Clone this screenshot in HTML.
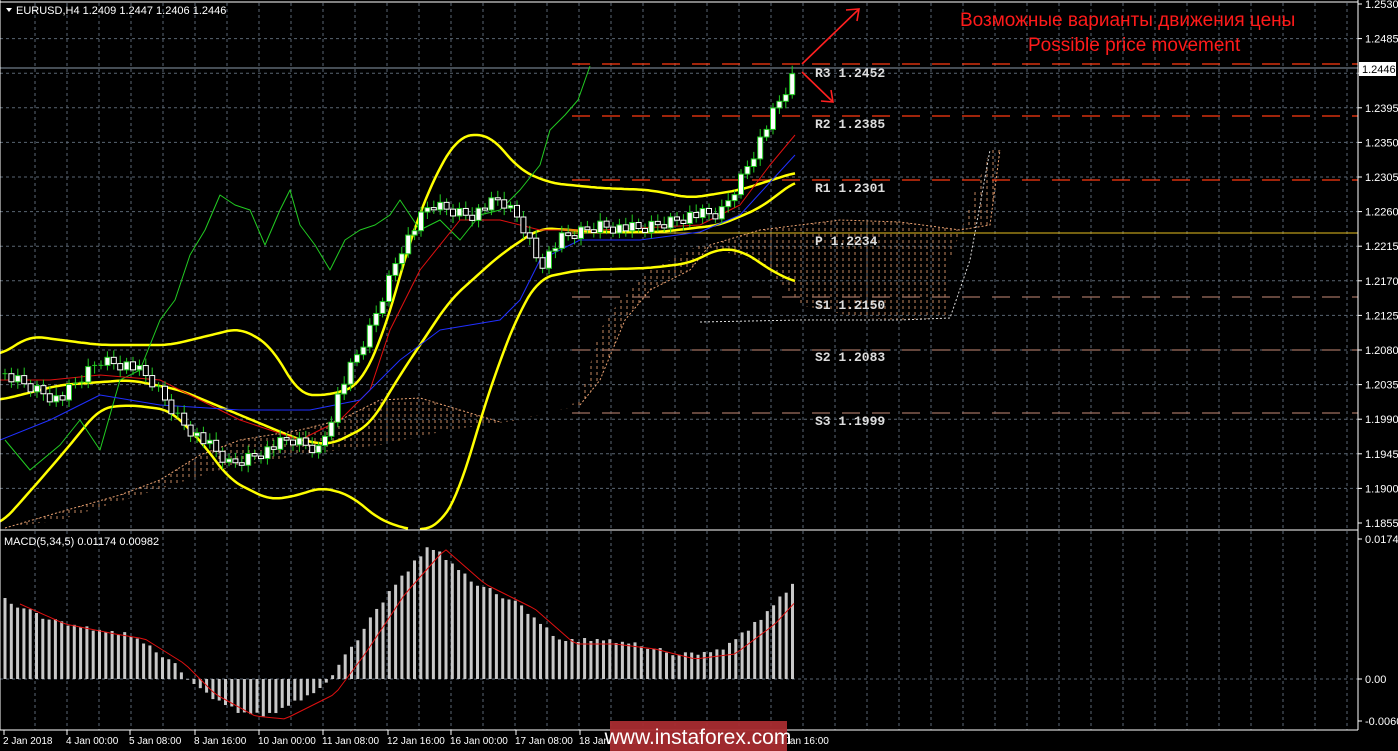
<!DOCTYPE html><html><head><meta charset="utf-8"><style>
html,body{margin:0;padding:0;background:#000;width:1398px;height:751px;overflow:hidden}
svg{display:block}
text{font-family:"Liberation Sans",sans-serif}
.mono text{font-family:"Liberation Mono",monospace}
</style></head><body>
<svg id="s" width="1398" height="751" xmlns="http://www.w3.org/2000/svg">
<defs>
<pattern id="cl" width="6" height="6" patternUnits="userSpaceOnUse"><line x1="3" y1="0" x2="3" y2="3" stroke="#e8a070" stroke-width="1"/></pattern>
</defs>
<rect width="1398" height="751" fill="#000"/>
<g id="grid"></g>
<polygon points="5,528 60,512 120,495 160,480 200,455 240,440 300,430 340,420 380,400 420,398 460,410 500,422 540,415 580,405 600,380 625,320 650,290 690,270 710,245 760,230 840,220 900,222 960,230 990,225 1000,150 990,150 950,260 950,318 900,320 860,318 800,305 760,262 700,245 650,270 620,300 600,330 580,400 560,410 520,420 450,430 380,445 300,455 220,470 140,495 60,520" fill="url(#cl)" opacity="0.85"/>
<polyline points="5,528 60,512 120,495 160,480 200,455 240,440 300,430 340,420 380,400 420,398 460,410 500,422" fill="none" stroke="#e8a070" stroke-dasharray="2,2"/>
<polyline points="580,405 600,380 625,320 650,290 690,270 710,245 760,230 840,220 900,222 960,230 990,225 1000,150" fill="none" stroke="#e8a070" stroke-dasharray="2,2"/>
<polyline points="700,322 800,320 900,320 950,318 970,260 990,150" fill="none" stroke="#ddd" stroke-dasharray="2,2"/>
<g stroke-width="1.3" stroke-dasharray="18,12">
<line x1="572" y1="64" x2="1358" y2="64" stroke="#ff3a10"/>
<line x1="572" y1="116" x2="1358" y2="116" stroke="#ff3a10"/>
<line x1="572" y1="180" x2="1358" y2="180" stroke="#ff3a10"/>
<line x1="572" y1="297" x2="1358" y2="297" stroke="#a07060"/>
<line x1="572" y1="350" x2="1358" y2="350" stroke="#a07060"/>
<line x1="572" y1="413" x2="1358" y2="413" stroke="#a07060"/>
</g>
<line x1="572" y1="233" x2="1358" y2="233" stroke="#e8c020" stroke-width="1"/>
<line x1="0" y1="68" x2="1358" y2="68" stroke="#8a9aaa" stroke-width="1"/>
<g class="mono" font-size="13" fill="#ddd" font-weight="bold">
<text x="815" y="77">R3 1.2452</text><text x="815" y="128">R2 1.2385</text><text x="815" y="192">R1 1.2301</text>
<text x="815" y="245">P 1.2234</text><text x="815" y="309">S1 1.2150</text><text x="815" y="361">S2 1.2083</text><text x="815" y="425">S3 1.1999</text>
</g>
<g id="ind" fill="none"></g>
<g id="candles"></g>
<g id="macd"></g>
<g stroke="#ff2020" stroke-width="1.6" fill="none">
<line x1="802" y1="64" x2="858" y2="10"/><polyline points="846,10 859,9 857,21"/>
<line x1="802" y1="72" x2="832" y2="101"/><polyline points="821,101 833,102 831,90"/>
</g>
<text x="960" y="26" font-size="19" fill="#ff1a1a">Возможные варианты движения цены</text>
<text x="1028" y="51" font-size="19" fill="#ff1a1a">Possible price movement</text>
<line x1="1358" y1="0" x2="1358" y2="730" stroke="#fff"/>
<line x1="0" y1="530" x2="1358" y2="530" stroke="#fff"/>
<line x1="0" y1="730" x2="1358" y2="730" stroke="#fff"/>
<line x1="0" y1="0" x2="0" y2="730" stroke="#fff"/>
<line x1="0" y1="2" x2="1358" y2="2" stroke="#fff"/>
<g id="axis" font-size="11" fill="#fff"></g>
<rect x="1359" y="62" width="37" height="14" fill="#fff"/>
<text x="1362" y="73" font-size="11" fill="#000">1.2446</text>
<path d="M6,8 L12,8 L9,12 Z" fill="#fff"/>
<text x="16" y="14" font-size="11" fill="#fff">EURUSD,H4  1.2409 1.2447 1.2406 1.2446</text>
<text x="4" y="545" font-size="11" fill="#fff">MACD(5,34,5) 0.01174 0.00982</text>
<rect x="610" y="721" width="177" height="30" fill="#a82c30" opacity="0.95"/>
<text x="698" y="744" font-size="21" fill="#fff" text-anchor="middle">www.instaforex.com</text>
</svg>
<script>
(function(){
var NS="http://www.w3.org/2000/svg";
function el(p,t,a){var e=document.createElementNS(NS,t);for(var k in a)e.setAttribute(k,a[k]);p.appendChild(e);return e;}
function interp(pts,x){for(var i=0;i<pts.length-1;i++){if(x>=pts[i][0]&&x<=pts[i+1][0]){var t=(x-pts[i][0])/(pts[i+1][0]-pts[i][0]);return pts[i][1]+t*(pts[i+1][1]-pts[i][1]);}}return pts[pts.length-1][1];}
function smooth(pts){var out=[];for(var x=pts[0][0];x<=pts[pts.length-1][0];x+=3){var s=0,n=0;for(var d=-12;d<=12;d+=3){var xx=Math.min(Math.max(x+d,pts[0][0]),pts[pts.length-1][0]);s+=interp(pts,xx);n++;}out.push([x,(s/n).toFixed(1)]);}return out;}
var g=document.getElementById("grid");
for(var x=35;x<1358;x+=32)el(g,"line",{x1:x,y1:3,x2:x,y2:730,stroke:"#5a6673","stroke-dasharray":"3,3"});
var ax=document.getElementById("axis");
var labs=["1.2530","1.2485","1.2440","1.2395","1.2350","1.2305","1.2260","1.2215","1.2170","1.2125","1.2080","1.2035","1.1990","1.1945","1.1900","1.1855"];
for(var i=0;i<labs.length;i++){var y=4+i*34.6;if(i>0&&i<15)el(g,"line",{x1:0,y1:y,x2:1358,y2:y,stroke:"#5a6673","stroke-dasharray":"3,3"});el(ax,"line",{x1:1358,y1:y,x2:1362,y2:y,stroke:"#fff"});if(i!=2){var t=el(ax,"text",{x:1365,y:y+4});t.textContent=labs[i];}}
[[539,"0.01748"],[679,"0.00"],[721,"-0.00604"]].forEach(function(a){el(ax,"line",{x1:1358,y1:a[0],x2:1362,y2:a[0],stroke:"#fff"});var t=el(ax,"text",{x:1365,y:a[0]+4});t.textContent=a[1];});
el(g,"line",{x1:0,y1:679,x2:1358,y2:679,stroke:"#5a6673","stroke-dasharray":"3,3"});
var dl=[[2,"2 Jan 2018"],[65,"4 Jan 00:00"],[128,"5 Jan 08:00"],[193,"8 Jan 16:00"],[257,"10 Jan 00:00"],[321,"11 Jan 08:00"],[386,"12 Jan 16:00"],[449,"16 Jan 00:00"],[514,"17 Jan 08:00"],[578,"18 Jan 16:00"],[770,"24 Jan 16:00"]];
dl.forEach(function(d){el(ax,"line",{x1:d[0]+2,y1:730,x2:d[0]+2,y2:735,stroke:"#fff"});var t=el(ax,"text",{x:d[0]+1,y:744,"font-size":"10"});t.textContent=d[1];});
var ind=document.getElementById("ind");
function line(pts,c,w,sm){if(sm)pts=smooth(pts);el(ind,"polyline",{points:pts.map(function(p){return p.join(",")}).join(" "),stroke:c,"stroke-width":w,fill:"none","stroke-linejoin":"round"});}
line([[0,355],[30,336],[100,345],[170,345],[240,328],[270,345],[300,395],[330,395],[360,385],[385,330],[410,240],[435,175],[460,135],[490,135],[520,170],[550,183],[600,188],[650,190],[690,198],[740,190],[797,172]],"#ffff00",2.5,1);
line([[0,400],[60,385],[130,380],[180,390],[240,415],[300,440],[330,445],[370,425],[400,375],[450,300],[500,255],[540,228],[600,232],[660,232],[720,225],[760,208],[797,180]],"#ffff00",2.5,1);
line([[0,525],[40,480],[70,445],[100,408],[130,405],[170,410],[200,440],[230,480],[270,500],[300,495],[320,487],[350,495],[380,520],[410,530]],"#ffff00",2.5,1);
line([[420,530],[440,525],[460,490],[480,420],[500,360],[520,310],[540,278],[580,270],[650,268],[690,263],[720,248],[745,252],[770,270],[797,283]],"#ffff00",2.5,1);
line([[5,440],[30,470],[60,445],[80,420],[100,450],[120,380],[140,370],[160,320],[175,300],[190,255],[205,230],[220,195],[235,205],[250,210],[265,245],[280,210],[290,190],[300,225],[315,245],[330,270],[345,240],[360,230],[375,225],[390,215],[400,200],[420,230],[440,220],[460,240],[480,215],[500,210],[520,190],[540,165],[550,130],[565,115],[578,100],[590,66]],"#22cc22",1,0);
line([[0,380],[50,380],[100,375],[160,380],[200,400],[240,420],[300,440],[340,420],[370,390],[390,330],[420,270],[460,220],[500,220],[540,230],[600,230],[700,225],[740,205],[770,165],[795,135]],"#e01010",1,0);
line([[0,440],[50,420],[100,395],[160,405],[240,410],[310,410],[360,400],[400,360],[440,330],[500,320],[520,300],[540,260],[580,240],[640,240],[700,232],[740,215],[795,155]],"#2030ff",1,0);
var cp=[[5,375],[60,400],[100,360],[130,365],[150,380],[180,420],[230,465],[290,440],[320,450],[340,390],[370,330],[400,250],[430,205],[470,215],[500,200],[520,220],[540,265],[560,240],[600,225],[640,230],[690,215],[720,215],[740,180],[770,120],[797,70]];
var cd=document.getElementById("candles"),prev=interp(cp,5),k=0;
for(var x=5;x<=797;x+=6.4){k++;var c=interp(cp,x)+((k*37)%11-5)*1.3;var o=prev;var tp=Math.min(o,c),bt=Math.max(o,c);
el(cd,"line",{x1:x,y1:tp-4-(k%5),x2:x,y2:bt+4+(k%4),stroke:"#22cc22"});
if(bt-tp<1.5)el(cd,"line",{x1:x-2.5,y1:tp,x2:x+2.5,y2:tp,stroke:"#22cc22"});
else el(cd,"rect",{x:x-2.5,y:tp,width:5,height:bt-tp,fill:c<o?"#fff":"#000",stroke:c<o?"#22cc22":"#fff"});prev=c;}
var mp=[[5,600],[50,620],[100,630],[130,635],[170,660],[200,690],[240,712],[270,715],[320,690],[350,650],[390,590],[430,545],[470,580],[520,605],[560,640],[600,640],[640,645],[680,655],[720,650],[760,620],[797,580]];
var m=document.getElementById("macd");
for(var x=5;x<=797;x+=6.3){var y=interp(mp,x)+((Math.round(x)*13)%5-2);el(m,"rect",{x:x-1.5,y:Math.min(y,679),width:3,height:Math.abs(679-y),fill:"#c8c8c8"});}
var sp=[];for(var x=20;x<=797;x+=6){sp.push([x,interp(mp,x-15)+4]);}
el(m,"polyline",{points:sp.map(function(p){return p.join(",")}).join(" "),stroke:"#e01010",fill:"none","stroke-width":1});
})();
</script>
</body></html>
